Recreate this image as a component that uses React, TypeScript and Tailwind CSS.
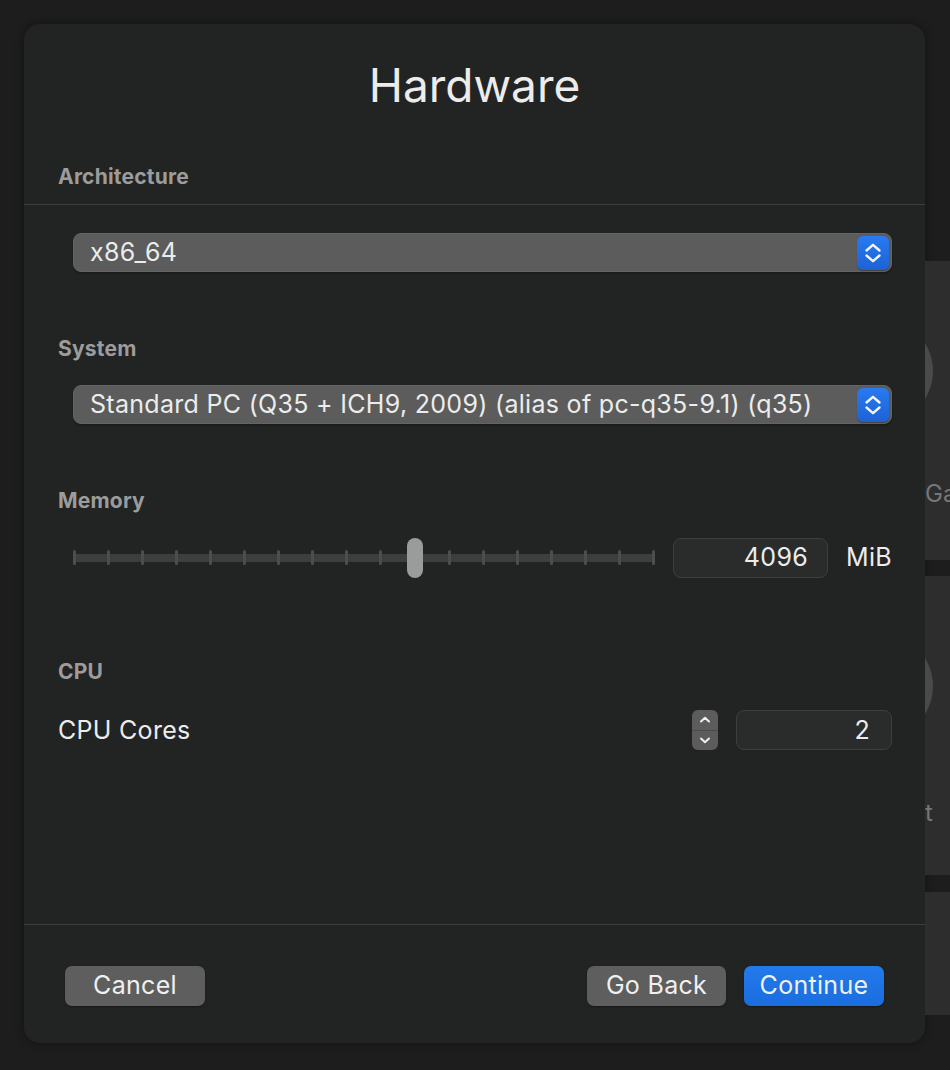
import React from 'react';

const font = "font-['Inter','Liberation_Sans',sans-serif]";

const Chevrons: React.FC = () => (
  <svg width="22" height="24" viewBox="0 0 22 24" fill="none">
    <path d="M4.5 9.5 L11 3.8 L17.5 9.5" stroke="#f2f6ff" strokeWidth="2.4" strokeLinecap="round" strokeLinejoin="round" />
    <path d="M4.5 14.5 L11 20.2 L17.5 14.5" stroke="#f2f6ff" strokeWidth="2.4" strokeLinecap="round" strokeLinejoin="round" />
  </svg>
);

const Popup: React.FC<{ value: string }> = ({ value }) => (
  <div className="ml-[15px] flex h-[39px] items-center justify-between rounded-[8px] border border-[#636463] bg-[#5b5c5b] pl-[16px] pr-[2px] shadow-[0_1px_2px_rgba(0,0,0,0.35)]">
    <span className="text-[25px] leading-none tracking-[0.3px] text-[#ececec]">{value}</span>
    <div className="flex h-[34px] w-[32px] items-center justify-center rounded-[6px] bg-gradient-to-b from-[#2a7af0] to-[#1c62d6] shadow-[0_1px_1px_rgba(0,0,0,0.3)]">
      <Chevrons />
    </div>
  </div>
);

const SectionLabel: React.FC<{ text: string }> = ({ text }) => (
  <div className="h-[24px] text-[21px] font-bold leading-[24px] tracking-[0.2px] text-[#9c9c9c]">{text}</div>
);

const Slider: React.FC = () => {
  const ticks = Array.from({ length: 18 }, (_, i) => i);
  return (
    <div className="grid h-[41px] w-[582px] shrink-0 items-center">
      <div className="[grid-area:1/1] h-[8px] rounded-full bg-[#3d3e3e]" />
      <div className="[grid-area:1/1] flex items-center justify-between">
        {ticks.map((i) =>
          i === 10 ? (
            <div key={i} className="flex w-[3px] justify-center">
              <div className="h-[40px] w-[16px] shrink-0 rounded-[8px] bg-[#9a9b9a]" />
            </div>
          ) : (
            <div key={i} className="h-[15px] w-[3px] rounded-full bg-[#4c4d4d]" />
          )
        )}
      </div>
    </div>
  );
};

const NumberField: React.FC<{ value: string; w: string; pr: string }> = ({ value, w, pr }) => (
  <div className={`flex h-[40px] shrink-0 items-center justify-end rounded-[8px] border border-[#3d3e3e] bg-[#2a2c2b] ${w} ${pr}`}>
    <span className="text-[25px] leading-none tracking-[0.3px] text-[#ececec]">{value}</span>
  </div>
);

const Button: React.FC<{ label: string; primary?: boolean; w: string }> = ({ label, primary, w }) => (
  <div
    className={`flex h-[40px] items-center justify-center rounded-[7px] text-[25px] tracking-[0.3px] text-[#f0f0f0] shadow-[0_1px_2px_rgba(0,0,0,0.35)] ${w} ${
      primary ? 'bg-gradient-to-b from-[#237aeb] to-[#1a6ddf]' : 'bg-[#5d5e5d]'
    }`}
  >
    {label}
  </div>
);

export default function App() {
  return (
    <div className={`flex h-[1070px] w-[950px] overflow-hidden bg-[#1d1d1d] pl-[24px] pt-[24px] ${font}`}>
      {/* Sheet */}
      <div className="flex h-[1019px] w-[901px] shrink-0 flex-col rounded-[16px] bg-[#222423] shadow-[0_0_10px_rgba(0,0,0,0.4)]">
        <div className="border-b border-[#3b3c3c]">
          <div className="pt-[33px] text-center text-[46px] leading-[56px] text-[#ececec]">Hardware</div>
          <div className="mt-[52px] mb-[15px] pl-[34px]">
            <SectionLabel text="Architecture" />
          </div>
        </div>

        <div className="flex-1 pl-[34px] pr-[33px] pt-[28px]">
          <Popup value="x86_64" />

          <div className="mt-[65px]">
            <SectionLabel text="System" />
          </div>
          <div className="mt-[24px]">
            <Popup value="Standard PC (Q35 + ICH9, 2009) (alias of pc-q35-9.1) (q35)" />
          </div>

          <div className="mt-[65px]">
            <SectionLabel text="Memory" />
          </div>
          <div className="mt-[24px] ml-[15px] flex items-center">
            <Slider />
            <div className="ml-[18px]">
              <NumberField value="4096" w="w-[155px]" pr="pr-[19px]" />
            </div>
            <span className="ml-auto whitespace-nowrap text-[25px] leading-none tracking-[0.3px] text-[#ececec]">MiB</span>
          </div>

          <div className="mt-[82px]">
            <SectionLabel text="CPU" />
          </div>
          <div className="mt-[26px] flex items-center">
            <span className="flex-1 text-[25px] leading-none tracking-[0.3px] text-[#ececec]">CPU Cores</span>
            <div className="flex h-[40px] w-[26px] flex-col overflow-hidden rounded-[6px] bg-[#5b5c5b]">
              <div className="flex flex-1 items-center justify-center border-b border-[#4a4b4a]">
                <svg width="14" height="10" viewBox="0 0 14 10" fill="none">
                  <path d="M3 6.5 L7 2.8 L11 6.5" stroke="#eeeeee" strokeWidth="2" strokeLinecap="round" strokeLinejoin="round" />
                </svg>
              </div>
              <div className="flex flex-1 items-center justify-center">
                <svg width="14" height="10" viewBox="0 0 14 10" fill="none">
                  <path d="M3 3.5 L7 7.2 L11 3.5" stroke="#eeeeee" strokeWidth="2" strokeLinecap="round" strokeLinejoin="round" />
                </svg>
              </div>
            </div>
            <div className="ml-[18px]">
              <NumberField value="2" w="w-[156px]" pr="pr-[21px]" />
            </div>
          </div>
        </div>

        {/* Footer */}
        <div className="flex items-center border-t border-[#3b3c3c] px-[41px] pt-[41px] pb-[37px]">
          <Button label="Cancel" w="w-[140px]" />
          <div className="flex-1" />
          <Button label="Go Back" w="w-[139px]" />
          <div className="ml-[18px]">
            <Button label="Continue" primary w="w-[140px]" />
          </div>
        </div>
      </div>

      {/* Window behind the sheet */}
      <div className="flex w-[25px] shrink-0 flex-col pt-[237px]">
        <div className="h-[299px] overflow-hidden bg-[#2d2d2d]">
          <div className="ml-[-98px] mt-[57px] h-[106px] w-[106px] rounded-full bg-[#4a4a4a]" />
          <div className="mt-[56px] whitespace-nowrap text-[24px] leading-[28px] text-[#767676]">Games</div>
        </div>
        <div className="mt-[16px] h-[299px] overflow-hidden bg-[#2d2d2d]">
          <div className="ml-[-98px] mt-[57px] h-[106px] w-[106px] rounded-full bg-[#4a4a4a]" />
          <div className="ml-[-66px] mt-[60px] whitespace-nowrap text-[24px] leading-[28px] text-[#767676]">Import</div>
        </div>
        <div className="mt-[17px] h-[123px] bg-[#2d2d2d]" />
      </div>
    </div>
  );
}
